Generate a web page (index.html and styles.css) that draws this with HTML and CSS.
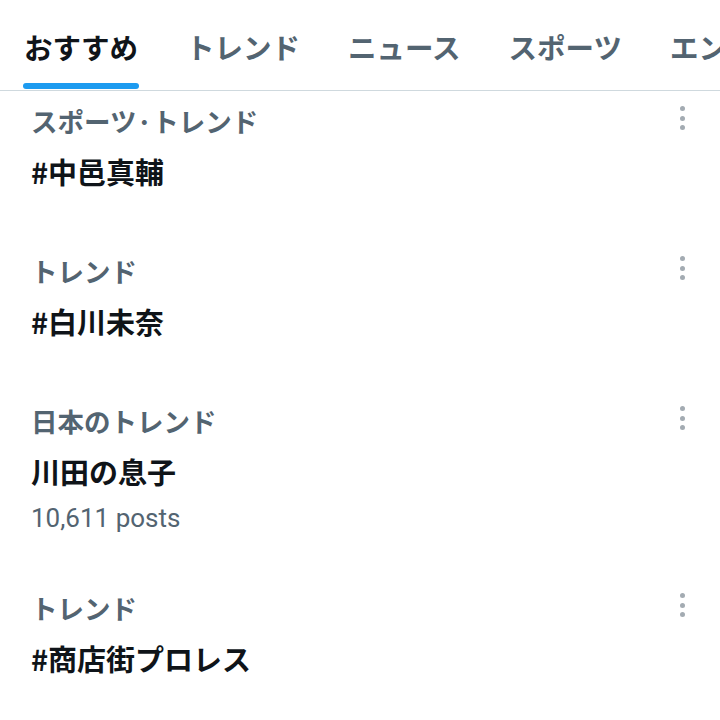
FILE: index.html
```html
<!DOCTYPE html>
<html lang="ja">
<head>
<meta charset="utf-8">
<title>話題を検索</title>
<link rel="stylesheet" href="styles.css">
</head>
<body>
<nav class="tabs">
  <div class="tab active"><span class="tab-label">おすすめ</span></div>
  <div class="tab"><span class="tab-label">トレンド</span></div>
  <div class="tab"><span class="tab-label">ニュース</span></div>
  <div class="tab"><span class="tab-label">スポーツ</span></div>
  <div class="tab"><span class="tab-label">エンタメ</span></div>
</nav>
<main class="trends">
  <article class="trend">
    <div class="trend-body">
      <div class="trend-context">スポーツ·トレンド</div>
      <div class="trend-name">#中邑真輔</div>
    </div>
    <button class="more" aria-label="その他"><span></span><span></span><span></span></button>
  </article>
  <article class="trend">
    <div class="trend-body">
      <div class="trend-context">トレンド</div>
      <div class="trend-name">#白川未奈</div>
    </div>
    <button class="more" aria-label="その他"><span></span><span></span><span></span></button>
  </article>
  <article class="trend">
    <div class="trend-body">
      <div class="trend-context">日本のトレンド</div>
      <div class="trend-name">川田の息子</div>
      <div class="trend-count">10,611 posts</div>
    </div>
    <button class="more" aria-label="その他"><span></span><span></span><span></span></button>
  </article>
  <article class="trend">
    <div class="trend-body">
      <div class="trend-context">トレンド</div>
      <div class="trend-name">#商店街プロレス</div>
    </div>
    <button class="more" aria-label="その他"><span></span><span></span><span></span></button>
  </article>
</main>
</body>
</html>
```

FILE: styles.css
```css
html, body {
  margin: 0;
  padding: 0;
  background: #ffffff;
}

body {
  width: 720px;
  height: 720px;
  overflow: hidden;
  font-family: "Noto Sans CJK JP", "Noto Sans", sans-serif;
  color: #0f1419;
}

/* top tab strip; the last tab runs off the right edge */
.tabs {
  display: flex;
  height: 90px;
  border-bottom: 1px solid #cfd9de;
  white-space: nowrap;
  overflow: hidden;
}

.tab {
  flex: 0 0 auto;
  display: flex;
  align-items: stretch;
  padding: 0 24px;
}

.tab-label {
  position: relative;
  display: flex;
  align-items: center;
  padding-top: 3px;
  font-size: 28.5px;
  font-weight: 700;
  color: #536471;
}

.tab.active .tab-label {
  color: #0f1419;
}

.tab.active .tab-label::after {
  content: "";
  position: absolute;
  left: -1px;
  right: -1px;
  bottom: 1px;
  height: 6px;
  border-radius: 3px;
  background: #1d9bf0;
}

/* trend list */
.trend {
  display: flex;
  justify-content: space-between;
  padding: 9px 0 41px 31px;
}

.trend-context {
  font-size: 26.5px;
  font-weight: 700;
  line-height: 42px;
  color: #536471;
}

.trend-name {
  font-size: 29px;
  font-weight: 700;
  line-height: 58px;
  color: #0f1419;
}

.trend-count {
  font-family: Roboto, "Noto Sans", sans-serif;
  font-size: 26px;
  line-height: 37px;
  color: #536471;
}

.more {
  flex: 0 0 auto;
  display: flex;
  flex-direction: column;
  align-items: center;
  gap: 4.5px;
  width: 40px;
  height: 42px;
  margin-right: 18px;
  padding: 6px 0 0;
  border: 0;
  background: transparent;
}

.more span {
  width: 5px;
  height: 5px;
  border-radius: 50%;
  background: #a3abb2;
}
```
